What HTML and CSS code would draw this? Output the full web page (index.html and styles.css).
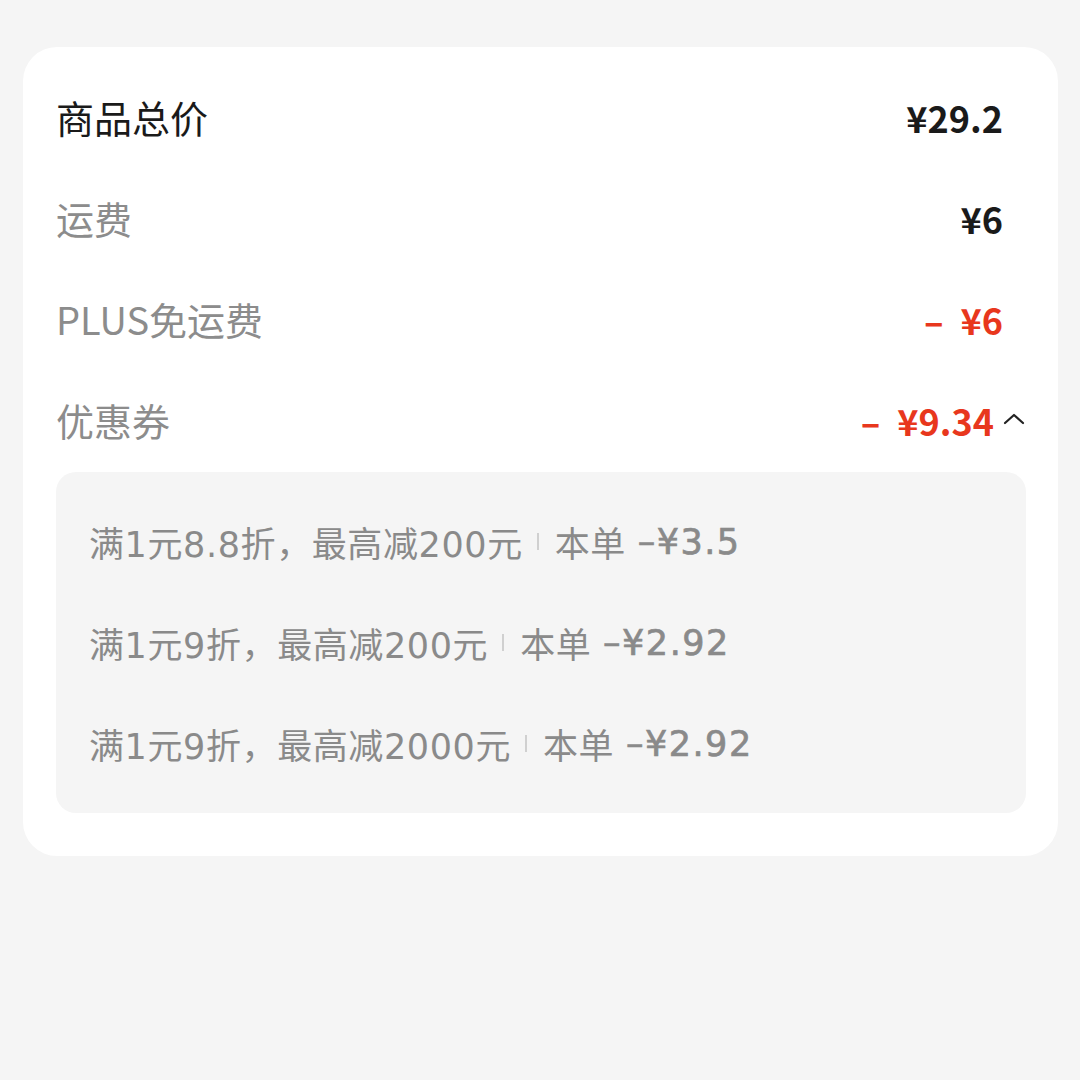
FILE: index.html
```html
<!DOCTYPE html>
<html lang="zh-CN">
<head>
  <meta charset="UTF-8" />
  <meta name="viewport" content="width=device-width, initial-scale=1.0"/>
  <title>订单金额</title>
  <link rel="stylesheet" href="styles.css">
</head>
<body>

  <div id="summary">
    <div class="row">
      <span class="label main">商品总价</span>
      <span class="price">¥29.2</span>
    </div>
    <div class="row">
      <span class="label">运费</span>
      <span class="price">¥6</span>
    </div>
    <div class="row">
      <span class="label">PLUS免运费</span>
      <span class="price red"><i class="minus">–</i>¥6</span>
    </div>
    <div class="row coupon-row">
      <span class="label">优惠券</span>
      <span class="price red"><i class="minus">–</i>¥9.34</span>
      <svg class="arrow" width="24" height="16" viewBox="0 0 24 16">
        <path d="M3 13 L12 5 L21 13" fill="none" stroke="#222" stroke-width="2.2" stroke-linecap="round" stroke-linejoin="round"/>
      </svg>
    </div>

    <div class="coupons">
      <div class="coupon">满1元8.8折，最高减200元<i class="sep"></i>本单 <b>–¥3.5</b></div>
      <div class="coupon">满1元9折，最高减200元<i class="sep"></i>本单 <b>–¥2.92</b></div>
      <div class="coupon">满1元9折，最高减2000元<i class="sep"></i>本单 <b>–¥2.92</b></div>
    </div>
  </div>

</body>
</html>
```

FILE: styles.css
```css
* {
  box-sizing: border-box;
}

body {
  margin: 0;
  padding: 47px 22px 0 23px;
  background: #f5f5f5;
  font-family: 'Noto Sans CJK SC', 'Noto Sans', sans-serif;
}

#summary {
  background: #fff;
  border-radius: 34px;
  padding: 21px 32px 43px 33px;
}

.row {
  display: flex;
  align-items: center;
  height: 101px;
  padding: 0 23px 4px 0;
}

.label {
  flex: 1;
  font-size: 38px;
  color: #8c8c8c;
}

.label.main {
  color: #1a1a1a;
}

.price {
  font-size: 36px;
  font-weight: 600;
  color: #1a1a1a;
}

.red {
  color: #e8371d;
  font-weight: 700;
}

.minus {
  font-style: normal;
  margin-right: 17px;
}

.coupon-row {
  padding-right: 0;
}

.arrow {
  margin-left: 8px;
  margin-top: -4px;
}

.coupons {
  background: #f5f5f5;
  border-radius: 20px;
  padding: 20px 33px 18px;
}

.coupon {
  display: flex;
  align-items: center;
  height: 101px;
  padding-bottom: 2px;
  font-family: 'DejaVu Sans', 'Noto Sans CJK SC', sans-serif;
  font-size: 35px;
  letter-spacing: 0.6px;
  color: #8a8a8a;
  white-space: pre;
}

.coupon b {
  font-weight: normal;
  letter-spacing: 1.5px;
  -webkit-text-stroke: 0.7px #8a8a8a;
}

.sep {
  display: inline-block;
  width: 2px;
  height: 17px;
  background: #d0d0d0;
  margin: 0 16px 0 14px;
}
```
